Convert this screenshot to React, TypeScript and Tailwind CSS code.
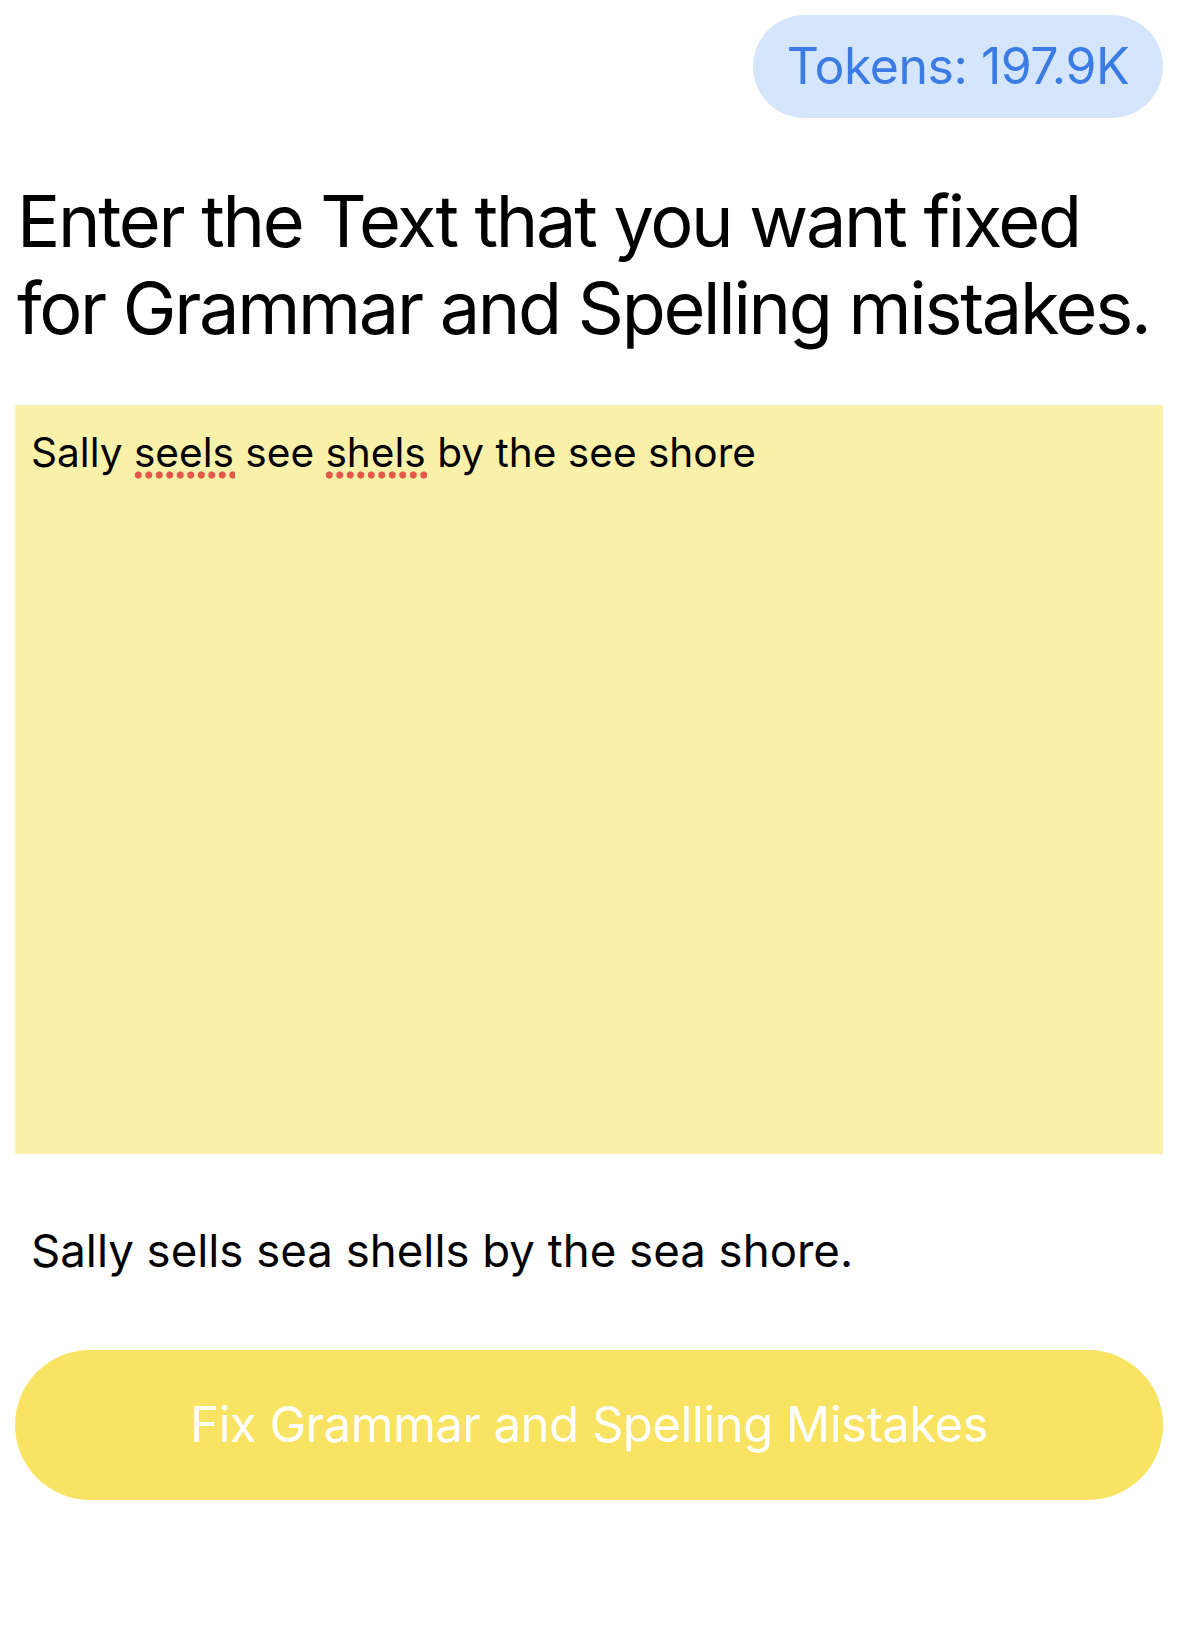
import type { ReactNode } from 'react';

const font = { fontFamily: 'Inter, "Liberation Sans", sans-serif' };

function Misspelled({ children }: { children: ReactNode }) {
  return (
    <span className="relative inline-block">
      {children}
      <span className="absolute bottom-[-2px] left-[-1px] right-[-1px] h-[8px] bg-[radial-gradient(circle,#e3584a_3.3px,transparent_3.9px)] bg-[length:10.5px_8px] bg-repeat-x" />
    </span>
  );
}

export default function App() {
  return (
    <div className="min-h-[1637px] w-full bg-white text-black" style={font}>
      <div className="flex flex-col pl-[15px] pr-[16px]">
        <div className="mt-[15px] flex justify-end">
          <div className="flex h-[103px] items-center rounded-full bg-[#d5e5fb] px-[34px] text-[50px] tracking-[-0.01em] text-[#3a7be4]">
            Tokens: 197.9K
          </div>
        </div>

        <h1 className="mt-[59px] pl-[2px] text-[72px] font-normal leading-[87px] tracking-[-2.3px]">
          Enter the Text that you want fixed for Grammar and Spelling mistakes.
        </h1>

        <div className="mt-[54px] h-[749px] bg-[#f9f1a9] px-[16px] pt-[24px] text-[40.6px] leading-[48px]">
          Sally <Misspelled>seels</Misspelled> see <Misspelled>shels</Misspelled> by the see shore
        </div>

        <p className="mt-[69px] pl-[16px] text-[45.6px] leading-[56px]">
          Sally sells sea shells by the sea shore.
        </p>

        <button className="mt-[71px] flex h-[150px] w-full items-center justify-center rounded-full bg-[#f8e363] text-[49px] tracking-[-0.01em] text-white">
          Fix Grammar and Spelling Mistakes
        </button>
      </div>
    </div>
  );
}
